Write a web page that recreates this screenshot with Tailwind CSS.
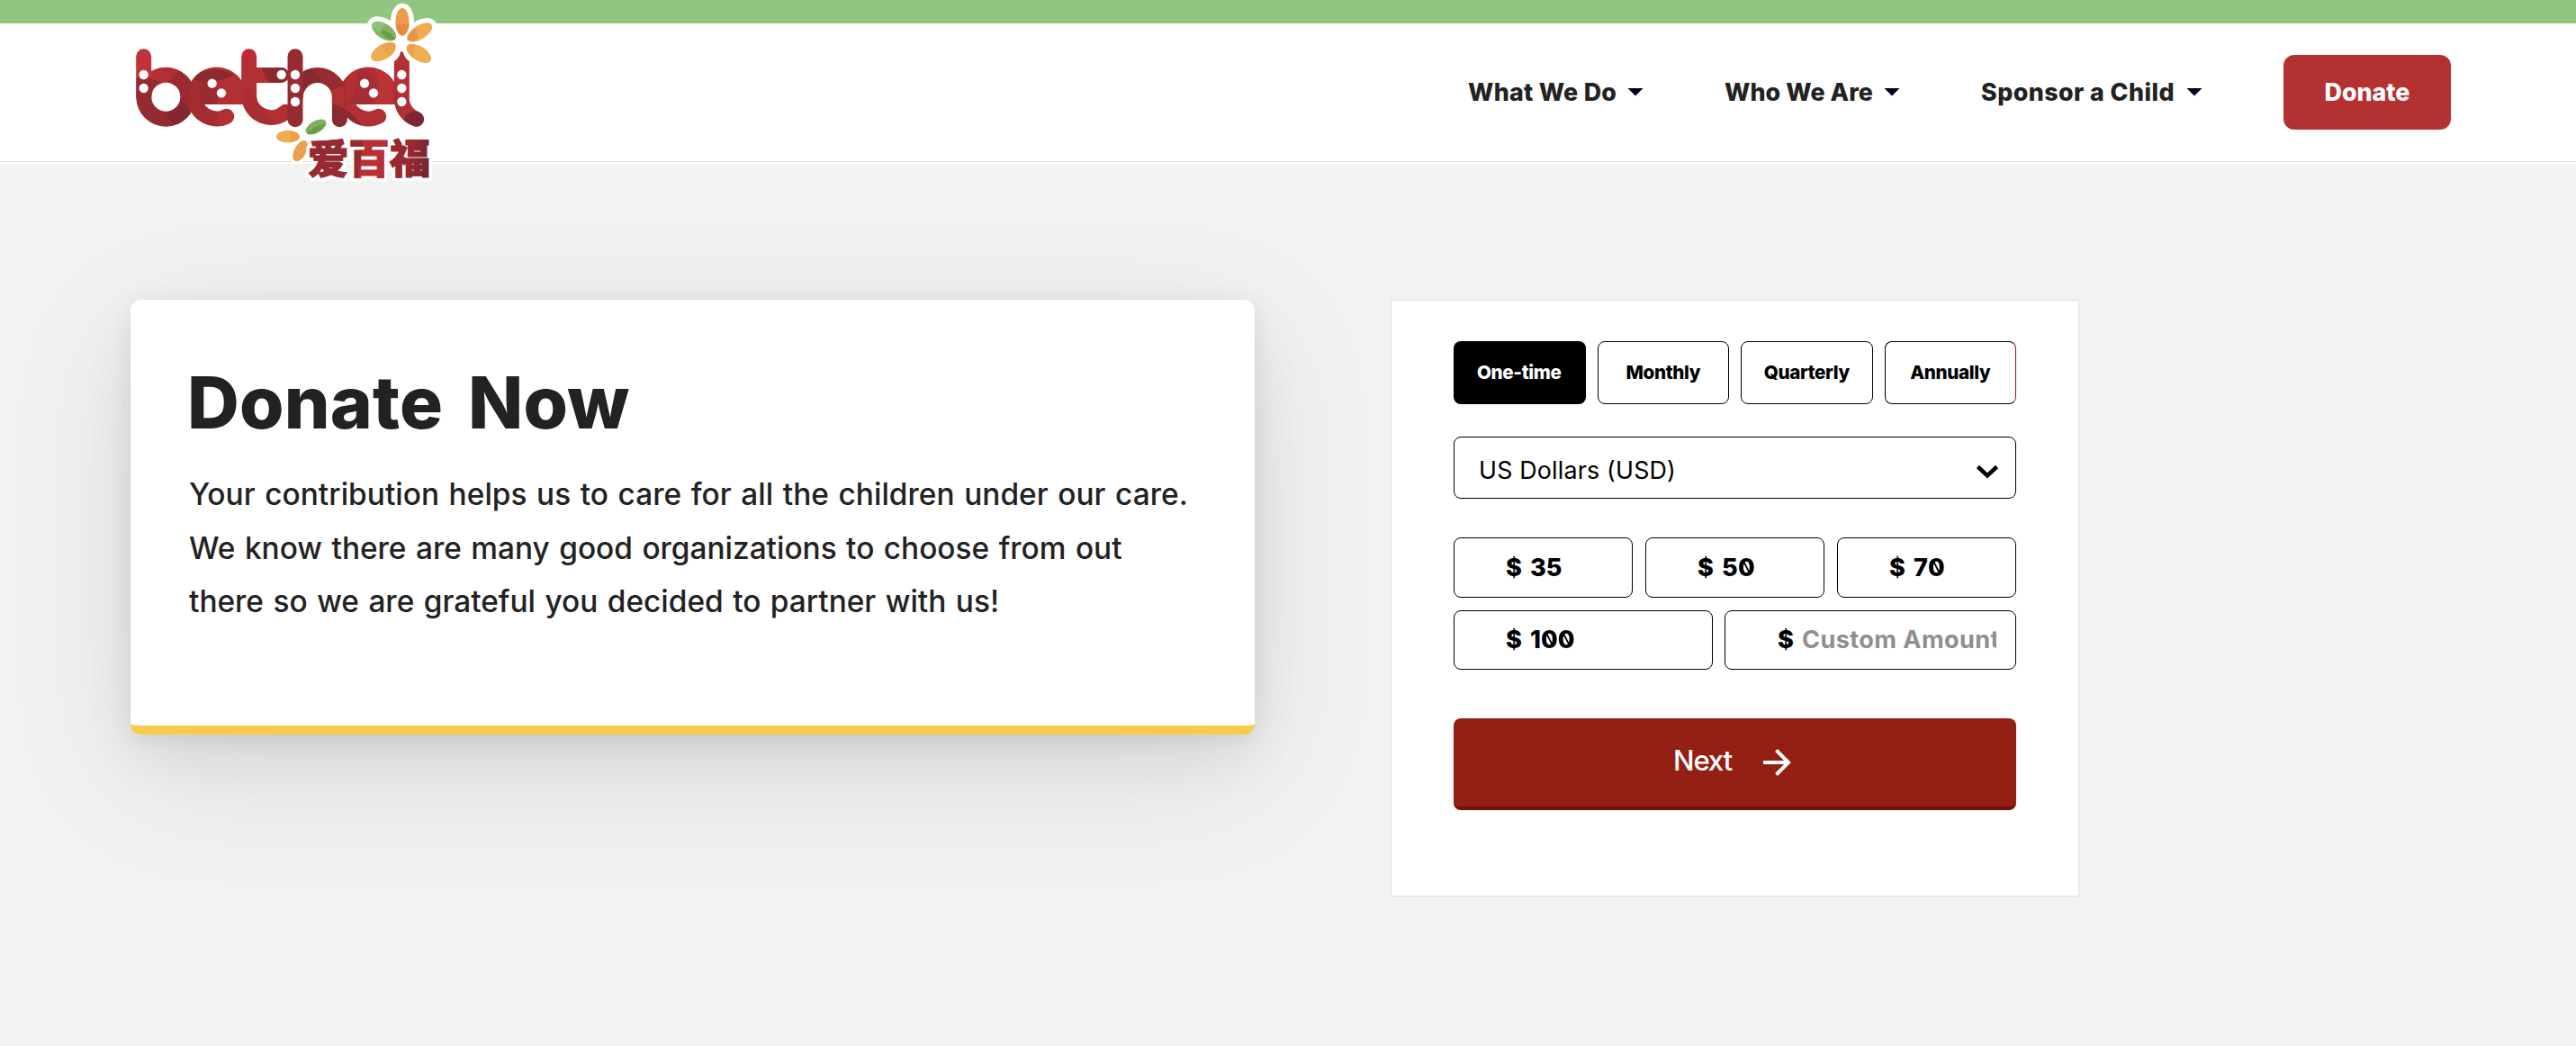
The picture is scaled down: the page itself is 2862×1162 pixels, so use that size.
<!DOCTYPE html>
<html lang="en">
<head>
<meta charset="utf-8">
<title>Donate Now</title>
<script src="https://cdn.jsdelivr.net/npm/@tailwindcss/browser@4"></script>
</head>
<body class="min-h-screen bg-[#f2f2f2] font-['Inter',sans-serif] text-[#222]">
<div class="h-[26px] bg-[#91c680]"></div>
<header class="relative h-[156px] bg-white pl-[145px] pr-[139px]">
  <div class="flex h-[154px] items-center justify-end pb-[2px] text-[26.8px] font-extrabold leading-8">
    <nav class="flex items-center">
      <a class="mr-[90px] flex items-center"><span class="w-[177px] tracking-[0.3px]">What We Do</span><span class="h-[9px] w-[18px] bg-[#00001f] [clip-path:polygon(0_0,100%_0,50%_100%)]"></span></a>
      <a class="mr-[90px] flex items-center"><span class="w-[177px] tracking-[0.1px]">Who We Are</span><span class="h-[9px] w-[18px] bg-[#00001f] [clip-path:polygon(0_0,100%_0,50%_100%)]"></span></a>
      <a class="mr-[90px] flex items-center"><span class="w-[228px] tracking-[0.45px]">Sponsor a Child</span><span class="h-[9px] w-[18px] bg-[#00001f] [clip-path:polygon(0_0,100%_0,50%_100%)]"></span></a>
    </nav>
    <a class="flex h-[83px] w-[186px] items-center justify-center rounded-xl bg-[#b33131] text-white">Donate</a>
  </div>
  <div class="absolute inset-x-0 top-[153px] h-px bg-[#d9d9d9]"></div>
  <svg class="absolute -top-[26px] left-[130px] h-[210px] w-[370px]" viewBox="0 0 1110 630" role="img" aria-label="bethel">
    <defs>
      <mask id="word">
        <g fill="none" stroke="#fff" stroke-width="51" stroke-linecap="round">
          <line x1="89" y1="188" x2="89" y2="322"/>
          <circle cx="163" cy="323" r="73.5"/>
          <line x1="594" y1="188" x2="594" y2="398"/>
          <path d="M742 398V324a73.5 73.5 0 0 0-147 0"/>
          <path d="M440 188V323a73.5 73.5 0 0 0 122 50"/>
          <path d="M949 235V323a73.5 73.5 0 0 0 49 74"/>
          <path d="M258.500 323A73.5 73.5 0 0 0 365 388"/>
          <path d="M764.500 323A73.5 73.5 0 0 0 872 388"/>
        </g>
        <path fill="#fff" d="M465 225h83a25 25 0 0 1 0 51h-83zM923.500 235V205q18-12 22-33q8 0 7 0q6 22 22 33v30z"/>
        <path fill="#fff" d="M233 323a99 99 0 0 1 187-46v71H236zM739 323a99 99 0 0 1 187-46v71H742z"/>
        <g>
          <circle cx="89" cy="249" r="15.500"/><circle cx="89" cy="294" r="15.500"/>
          <circle cx="317" cy="278" r="15.500"/><circle cx="348" cy="310" r="15.500"/>
          <circle cx="548" cy="249" r="15.500"/>
          <circle cx="594" cy="249" r="15.500"/><circle cx="594" cy="294" r="15.500"/><circle cx="594" cy="339" r="15.500"/>
          <circle cx="825" cy="278" r="15.500"/><circle cx="855" cy="310" r="15.500"/>
          <circle cx="949" cy="249" r="15.500"/><circle cx="949" cy="294" r="15.500"/><circle cx="949" cy="339" r="15.500"/>
        </g>
      </mask>
      <linearGradient id="han" gradientUnits="userSpaceOnUse" x1="640" x2="1040" y1="450" y2="500"><stop offset="0" stop-color="#962a30"/><stop offset=".44" stop-color="#962a30"/><stop offset=".46" stop-color="#b83034"/><stop offset=".64" stop-color="#b83034"/><stop offset=".66" stop-color="#962a30"/><stop offset=".85" stop-color="#962a30"/><stop offset="1" stop-color="#782630"/></linearGradient>
    </defs>
    <g fill="#fff" stroke="#fff" stroke-width="32" stroke-linejoin="round">
      <ellipse cx="951" cy="73" rx="23" ry="46"/>
      <ellipse cx="890" cy="104" rx="46" ry="25" transform="rotate(34 890 104)"/>
      <ellipse cx="1009" cy="108" rx="47" ry="23" transform="rotate(-33 1009 108)"/>
      <ellipse cx="888" cy="173" rx="46" ry="25" transform="rotate(-31 888 173)"/>
      <ellipse cx="1006" cy="178" rx="46" ry="24" transform="rotate(32 1006 178)"/>
      <circle cx="950" cy="130" r="25"/>
    </g>
    <g fill="#fff" stroke="#fff" stroke-width="18">
      <ellipse cx="570" cy="455" rx="39" ry="20"/>
      <ellipse cx="663" cy="423" rx="38" ry="20" transform="rotate(-30 663 423)"/>
      <ellipse cx="611" cy="503" rx="38" ry="20" transform="rotate(-62 611 503)"/>
    </g>
    <g mask="url(#word)">
      <rect x="50" y="150" width="990" height="290" fill="#b23033"/>
      <rect x="50" y="150" width="66" height="105" fill="#c03439"/>
      <path fill="#942b30" d="M50 262q60-10 100 15l90 40 10 60-50 60H50z"/>
      <path fill="#7e2730" fill-opacity=".7" d="M160 370q30 0 50-40l50 50-60 45q-20-15-40-55z"/>
      <path fill="#9a2b30" d="M210 232q40 20 50 60l60 40 10 100h-70l-30-100-60-60z"/>
      <path fill="#8a2930" d="M244 268q60-60 145-20-40 30-145 20z"/>
      <path fill="#a52d32" fill-opacity=".8" d="M245 270q50 10 85 60l10 100h-80l-20-60z"/>
      <path fill="#8f2a30" fill-opacity=".6" d="M270 265q90 10 60 83h-50z"/>
      <path fill="#c42836" d="M410 150h60v50q-50-15-58 15z"/>
      <path fill="#8c2930" d="M482 220h90v60h-60q-20-20-30-60z"/>
      <path fill="#a92e32" d="M430 290q40 60 110 130l-60 10-60-60z"/>
      <rect x="568" y="150" width="53" height="280" fill="#962b31"/>
      <path fill="#872830" d="M621 220h90l50 60-10 20-60 0-70 10z"/>
      <path fill="#a02c31" fill-opacity=".7" d="M640 220q50 50 40 80l80 60v-80l-50-50z"/>
      <path fill="#b03033" d="M717 300q40-20 40 0v70q-20-20-40-22z"/>
      <path fill="#8a2930" d="M717 348q50 5 100 70l-40 15h-70z"/>
      <path fill="#9c2c31" fill-opacity=".65" d="M800 225q100 20 50 123h-90q50-40 40-123z"/>
      <path fill="#bd3236" d="M860 225q60 20 60 75v48h-60q30-60 0-123z"/>
      <path fill="#a02c31" fill-opacity=".6" d="M923 300q30 20 20 90l-20-30z"/>
      <path fill="#7b2630" d="M955 405q10-35 50-35h40v60h-70z"/>
    </g>
    <ellipse cx="951" cy="73" rx="23" ry="46" fill="#eb9c4b"/>
    <path d="M929 83q22-8 45-2-2 26-23 38-20-12-22-36z" fill="#e68b42"/>
    <ellipse cx="890" cy="104" rx="46" ry="25" transform="rotate(34 890 104)" fill="#85b363"/>
    <path d="M850 78q25-10 45 3-18 6-16 26-30-14-29-29z" fill="#8dc47d"/>
    <path d="M878 103q26-8 50 28-30 8-50-28z" fill="#6c9c46"/>
    <ellipse cx="1009" cy="108" rx="47" ry="23" transform="rotate(-33 1009 108)" fill="#eeae50"/>
    <path d="M967 132q0-20 26-37 12 12 8 36-20 10-34 1z" fill="#e8934a"/>
    <ellipse cx="888" cy="173" rx="46" ry="25" transform="rotate(-31 888 173)" fill="#eeae50"/>
    <path d="M882 150q30-15 46-4 2 20-22 40-16-14-24-36z" fill="#eca34d"/>
    <ellipse cx="1006" cy="178" rx="46" ry="24" transform="rotate(32 1006 178)" fill="#efae51"/>
    <path d="M965 155q10-12 28-6l-5 41q-20-14-23-35z" fill="#eca14d"/>
    <ellipse cx="570" cy="455" rx="39" ry="20" fill="#ee9f48"/>
    <path d="M532 453q16-18 40-17 14 18 2 38-38 0-42-21z" fill="#eeae50"/>
    <ellipse cx="663" cy="423" rx="38" ry="20" transform="rotate(-30 663 423)" fill="#7fb05d"/>
    <path d="M633 443q30-26 62-30-12 32-60 34z" fill="#6c9c46"/>
    <ellipse cx="611" cy="503" rx="38" ry="20" transform="rotate(-62 611 503)" fill="#ec9f4c"/>
    <text x="636" y="579" font-size="136" font-weight="900" font-family="'Noto Sans CJK SC',sans-serif" fill="url(#han)" stroke="#fff" stroke-width="26" stroke-linejoin="round" paint-order="stroke">爱百福</text>
    <text x="636" y="579" font-size="136" font-weight="900" font-family="'Noto Sans CJK SC',sans-serif" fill="url(#han)" stroke="url(#han)" stroke-width="3" aria-hidden="true">爱百福</text>
  </svg>
</header>
<main class="flex items-start gap-[151px] pl-[145px] pt-[151px]">
  <section class="h-[483px] w-[1249px] rounded-xl border-b-10 border-[#f8cc48] bg-white px-[65px] pt-[70px] shadow-[0_40px_150px_rgba(0,0,0,0.10),0_24px_60px_rgba(0,0,0,0.06),0_4px_22px_rgba(0,0,0,0.07)]">
    <h1 class="-ml-[2px] text-[80px] font-extrabold leading-[88px] tracking-[0.2px] [word-spacing:10px]">Donate Now</h1>
    <p class="mt-[29px] whitespace-nowrap text-[33.4px] font-[450] leading-[59.5px] [word-spacing:1.6px]"><span class="tracking-[0.04px]">Your contribution helps us to care for all the children under our care.</span><br>We know there are many good organizations to choose from out<br>there so we are grateful you decided to partner with us!</p>
  </section>
  <form class="h-[663px] w-[765px] border border-[#e0e0e0] bg-white px-[69px] pt-[45px] text-black">
    <div class="grid h-[70px] grid-cols-4 gap-[13px] text-[20.6px] font-extrabold tracking-[-0.35px]">
      <div class="flex items-center justify-center rounded-lg bg-black pr-px text-white">One-time</div>
      <div class="flex items-center justify-center rounded-lg border border-black">Monthly</div>
      <div class="flex items-center justify-center rounded-lg border border-black">Quarterly</div>
      <div class="flex items-center justify-center rounded-lg border border-black border-r-[#941f14]">Annually</div>
    </div>
    <div class="mt-9 flex h-[69px] items-center justify-between rounded-lg border border-black pl-[27px] pr-[19px] text-[26.8px] tracking-[0.2px]"><span class="pt-[5px]">US Dollars (USD)</span>
      <svg class="mt-2 h-4 w-6" viewBox="0 0 24 16" fill="none" stroke="#000" stroke-width="4.500"><path d="M1.500 2.500 12 12.500 22.500 2.500"/></svg>
    </div>
    <div class="mt-[43px] grid h-[67px] grid-cols-3 gap-[14px] text-[27.1px] font-extrabold">
      <div class="flex items-center rounded-lg border border-black pl-[57px] pt-px"><span class="w-[27px]">$</span><span>35</span></div>
      <div class="flex items-center rounded-lg border border-black pl-[57px] pt-px"><span class="w-[27px]">$</span><span>5</span><span class="-scale-x-100 [font-feature-settings:'zero']">0</span></div>
      <div class="flex items-center rounded-lg border border-black pl-[57px] pt-px"><span class="w-[27px]">$</span><span>7</span><span class="-scale-x-100 [font-feature-settings:'zero']">0</span></div>
    </div>
    <div class="mt-[14px] flex h-[66px] gap-[13px] text-[27.1px] font-extrabold">
      <div class="flex w-[288px] items-center rounded-lg border border-black pl-[57px]"><span class="w-[27px]">$</span><span>1</span><span class="-scale-x-100 [font-feature-settings:'zero']">00</span></div>
      <div class="flex w-[324px] items-center rounded-lg border border-black pl-[58px]"><span class="w-[27px]">$</span><span class="w-[216px] overflow-hidden whitespace-nowrap font-bold tracking-[0.4px] text-[#8f8f8f]">Custom Amount</span></div>
    </div>
    <div class="mt-[54px] flex h-[102px] items-center rounded-lg border-b-4 border-[#6d130c] bg-[#941f14] pl-[244px] text-[31.2px] font-[450] tracking-[-1.2px] text-white">
      <span class="w-[100px] pb-[3px]">Next</span>
      <svg class="h-[30px] w-[31px]" viewBox="0 0 31 30" fill="none" stroke="#fff" stroke-width="4"><path d="M0 15h28M14.500 1.500 28 15 14.500 28.500"/></svg>
    </div>
  </form>
</main>
</body>
</html>
